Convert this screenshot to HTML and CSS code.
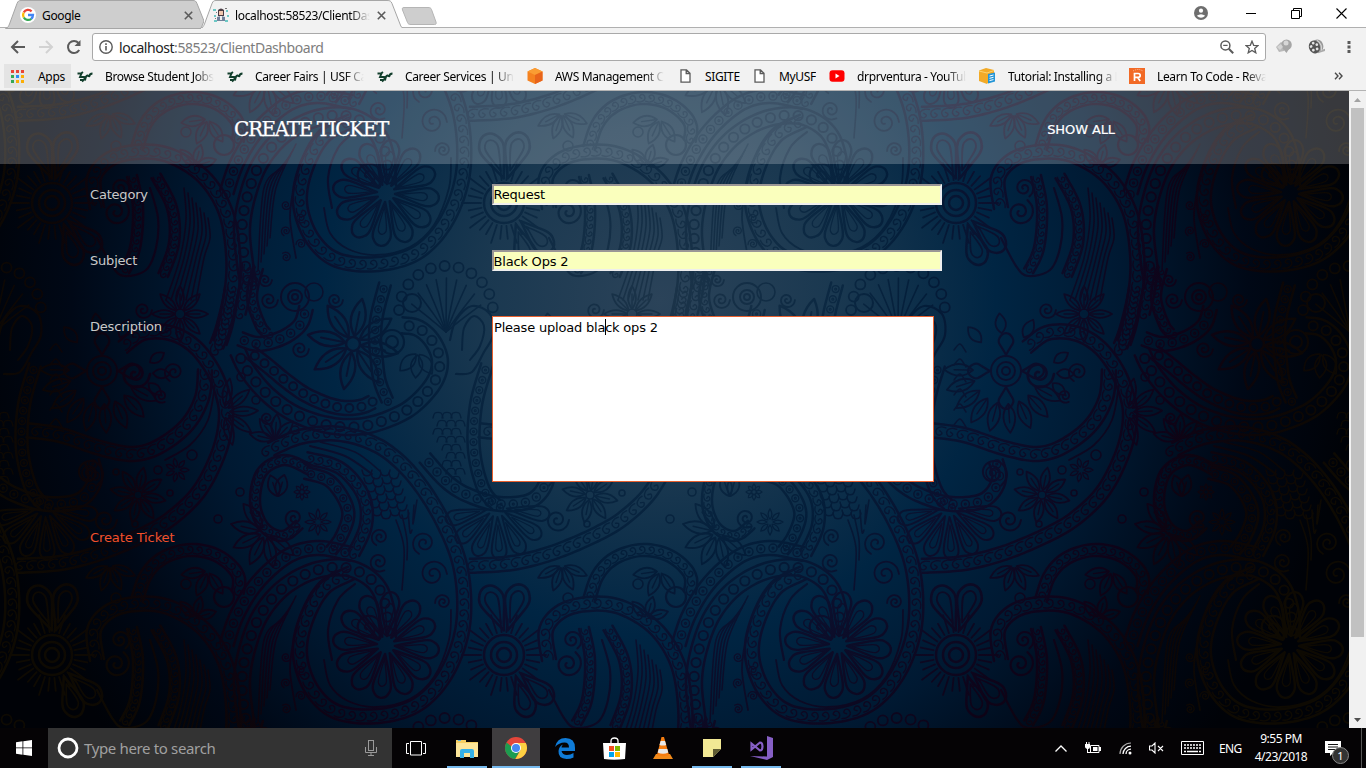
FILE: index.html
```html
<!DOCTYPE html>
<html lang="en">
<head>
<meta charset="utf-8">
<title>Create Ticket</title>
<link rel="stylesheet" href="styles.css">
</head>
<body>
<div class="screen">
  <div class="tabstrip">
    <div class="tab">
      <svg class="tab-shape" width="204" height="29"><path d="M5.500 28.500C8 28 8.500 26 9.500 24L17 3.500C18 1 19 .5 21 .5H193C195 .5 196 1 197 3.500L204 21L201 28.500Z" fill="#cecece" stroke="#a6a6a6"/></svg>
      <svg class="tab-icon" width="16" height="16" viewBox="0 0 16 16"><circle cx="8" cy="8" r="8" fill="#fff"/><g fill="none" stroke-width="2.300"><path d="M3.800 5.400A5 5 0 0 1 11.600 4.300" stroke="#ea4335"/><path d="M3.700 10.400A5 5 0 0 1 3.700 5.600" stroke="#fbbc05"/><path d="M11.300 11.800A5 5 0 0 1 3.800 10.500" stroke="#34a853"/><path d="M8 8H13A5 5 0 0 1 11.200 11.800" stroke="#4285f4"/></g></svg>
      <span class="tab-title">Google</span>
      <svg class="tab-close" width="9" height="9"><path d="M.8.8 8.200 8.200M8.200.8.8 8.200" stroke="#5a5a5a" stroke-width="1.600"/></svg>
    </div>
    <div class="tab active">
      <svg class="tab-shape" width="206" height="29"><path d="M0 28.500C3 28 3.500 26 4.500 24L12 3.500C13 1 14 .5 16 .5H187C190 .5 191 1 192 3.500L200 24C201 27 202 28.500 205 28.500" fill="#f2f2f2" stroke="#a6a6a6"/><path d="M1 28.500H205" stroke="#f2f2f2"/></svg>
      <svg class="tab-icon" width="16" height="16" viewBox="0 0 16 16"><path d="M5 6V3Q8 0 11 3V9H5Z" fill="#493b43"/><path d="M6 4H10V8H6Z" fill="#f1c7ae"/><path d="M4 14V10L8 9L12 10V14Z" fill="#72829b"/><path d="M7 9H9V13H7Z" fill="#eee"/><g fill="#6dc8c5"><path d="M0 2H3V4H0ZM1 8H3V10H1ZM13 3H15V5H13ZM14 8H16V10H14ZM1 13H4V15H1ZM12 13H15V15H12Z"/></g><path d="M3 5H4V6H3ZM12 1H14V2H12ZM2 11H3V12H2Z" fill="#777"/></svg>
      <span class="tab-title fade">localhost:58523/ClientDashboard</span>
      <svg class="tab-close" width="9" height="9"><path d="M.8.8 8.200 8.200M8.200.8.8 8.200" stroke="#5a5a5a" stroke-width="1.600"/></svg>
    </div>
    <svg class="new-tab" width="36" height="20"><path d="M3 1.500H27C29 1.500 30 2 30.500 3.500L35 16C35.500 18 35 18.500 33.500 18.500H10C8 18.500 7 18 6.500 16.500L1.500 4C1 2 1.500 1.500 3 1.500Z" fill="#cecece" stroke="#b5b5b5"/></svg>
    <div class="window-buttons">
      <svg width="14" height="14" viewBox="0 0 14 14"><circle cx="7" cy="7" r="7" fill="#6e6e6e"/><circle cx="7" cy="4.700" r="2.100" fill="#fff"/><path d="M2.800 9.800Q7 6.700 11.200 9.800Q7 13.800 2.800 9.800Z" fill="#fff"/></svg>
      <svg class="minimise" width="10" height="12"><path d="M0 6.500H10" stroke="#000"/></svg>
      <svg width="11" height="11"><path d="M.5 2.500H8.500V10.500H.5ZM2.500 2.500V.5H10.500V8.500H8.500" fill="none" stroke="#000"/></svg>
      <svg width="11" height="11"><path d="M.5.5 10.500 10.500M10.500.5.5 10.500" stroke="#000" stroke-width="1.100"/></svg>
    </div>
  </div>

  <div class="toolbar">
    <svg class="nav-icon" width="16" height="16" viewBox="0 0 16 16"><path d="M15 8H2.500M8 2 2 8 8 14" fill="none" stroke="#5a5a5a" stroke-width="2"/></svg>
    <svg class="nav-icon" width="16" height="16" viewBox="0 0 16 16"><path d="M1 8H13.500M8 2 14 8 8 14" fill="none" stroke="#d2d2d2" stroke-width="2"/></svg>
    <svg class="nav-icon" width="16" height="16" viewBox="0 0 16 16"><path d="M13.200 11A6 6 0 1 1 12.500 4" fill="none" stroke="#5a5a5a" stroke-width="2"/><path d="M14.500 1V7H8.500Z" fill="#5a5a5a"/></svg>
    <div class="omnibox">
      <svg width="14" height="14" viewBox="0 0 14 14"><circle cx="7" cy="7" r="6.200" fill="none" stroke="#5a5a5a" stroke-width="1.400"/><path d="M7 6V10.500M7 3.300V4.900" stroke="#5a5a5a" stroke-width="1.600"/></svg>
      <span class="url"><span class="host">localhost</span>:58523/ClientDashboard</span>
      <svg class="zoom-icon" width="14" height="14" viewBox="0 0 14 14"><circle cx="5.400" cy="5.400" r="4.500" fill="none" stroke="#5a5a5a" stroke-width="1.500"/><path d="M3.200 5.400H7.600" stroke="#5a5a5a" stroke-width="1.200"/><path d="M8.800 8.800 13.200 13.200" stroke="#5a5a5a" stroke-width="2"/></svg>
      <svg width="14" height="14" viewBox="0 0 14 14"><path d="M7 1.200 8.700 5.300 13 5.600 9.700 8.400 10.800 12.800 7 10.400 3.200 12.800 4.300 8.400 1 5.600 5.300 5.300Z" fill="none" stroke="#5a5a5a" stroke-width="1.300"/></svg>
    </div>
    <div class="extensions">
      <svg width="18" height="16" viewBox="0 0 18 16"><path d="M1 8 6 3 10 6 9 12 4 13Z" fill="#b9b9b9"/><circle cx="11.500" cy="5.800" r="5.300" fill="#a6a6a6"/><path d="M8 10 11.500 14 14 10Z" fill="#a6a6a6"/><circle cx="11" cy="4" r="2.500" fill="#d7d7d7"/><path d="M2 8 6 5 8 8 5 11Z" fill="#d4d4d4"/></svg>
      <svg width="17" height="16" viewBox="0 0 17 16"><g transform="rotate(-18 8 8)"><ellipse cx="10" cy="7.500" rx="5.500" ry="6.500" fill="#999"/><path d="M8 12.500H16V14.500H8Z" fill="#aaa"/><ellipse cx="6.500" cy="7.500" rx="5.500" ry="6.500" fill="#555"/><g fill="#e4e4e4"><circle cx="6.500" cy="3.500" r="1.400"/><circle cx="3.500" cy="6" r="1.400"/><circle cx="9.500" cy="6" r="1.400"/><circle cx="4.500" cy="10.200" r="1.400"/><circle cx="8.500" cy="10.200" r="1.400"/></g><path d="M11 2Q15 7 12 13" stroke="#ddd" fill="none"/></g></svg>
      <svg width="4" height="14"><path d="M.5 1H3.500V4H.5ZM.5 5.500H3.500V8.500H.5ZM.5 10H3.500V13H.5Z" fill="#5a5a5a"/></svg>
    </div>
  </div>

  <div class="bookmarks">
    <div class="apps"><svg width="13" height="13"><path d="M0 0H3V3H0ZM5 0H8V3H5ZM10 0H13V3H10Z" fill="#ea4335"/><path d="M0 5H3V8H0ZM0 10H3V13H0Z" fill="#34a853"/><path d="M5 5H8V8H5Z" fill="#2a8cf5"/><path d="M10 5H13V8H10ZM5 10H8V13H5ZM10 10H13V13H10Z" fill="#fbae05"/></svg><span>Apps</span></div>
    <div class="mark"><svg width="16" height="16" viewBox="0 0 16 16"><path class="usf" d="M.5 5.500 4 5.500 6 4M4.500 5.500 3 9H7.500Q9 9 7 11.500L5 13.500M3 12H6.500M8 12.500Q9 7 10.500 7.500T12 9Q12.500 5.500 15.500 5.500"/></svg><span>Browse Student Jobs</span></div>
    <div class="mark"><svg width="16" height="16" viewBox="0 0 16 16"><path class="usf" d="M.5 5.500 4 5.500 6 4M4.500 5.500 3 9H7.500Q9 9 7 11.500L5 13.500M3 12H6.500M8 12.500Q9 7 10.500 7.500T12 9Q12.500 5.500 15.500 5.500"/></svg><span>Career Fairs | USF Career</span></div>
    <div class="mark"><svg width="16" height="16" viewBox="0 0 16 16"><path class="usf" d="M.5 5.500 4 5.500 6 4M4.500 5.500 3 9H7.500Q9 9 7 11.500L5 13.500M3 12H6.500M8 12.500Q9 7 10.500 7.500T12 9Q12.500 5.500 15.500 5.500"/></svg><span>Career Services | University</span></div>
    <div class="mark"><svg width="16" height="16" viewBox="0 0 16 16"><path d="M8 0 15.500 3.500V12.500L8 16 .5 12.500V3.500Z" fill="#f58220"/><path d="M8 0 15.500 3.500 8 7 .5 3.500Z" fill="#fa9d33"/><path d="M8 7 15.500 3.500V12.500L8 16Z" fill="#e8641b"/></svg><span>AWS Management Console</span></div>
    <div class="mark file"><svg width="11" height="14" viewBox="0 0 11 14"><path d="M1 .8H6.500L10 4.300V13.200H1ZM6.200.8V4.500H10" fill="#fff" stroke="#5a5a5a" stroke-width="1.300"/></svg><span>SIGITE</span></div>
    <div class="mark file"><svg width="11" height="14" viewBox="0 0 11 14"><path d="M1 .8H6.500L10 4.300V13.200H1ZM6.200.8V4.500H10" fill="#fff" stroke="#5a5a5a" stroke-width="1.300"/></svg><span>MyUSF</span></div>
    <div class="mark"><svg width="16" height="16" viewBox="0 0 16 16"><rect x=".5" y="2.300" width="15" height="11.400" rx="3" fill="#f00"/><path d="M6.500 5.500V10.500L10.500 8Z" fill="#fff"/></svg><span>drprventura - YouTube</span></div>
    <div class="mark"><svg width="17" height="16" viewBox="0 0 17 16"><path d="M0 2.500 7 0 15 2V7L8 16 0 13Z" fill="#f2aa27"/><path d="M0 3 8 5 15 2.500" stroke="#fbd36f" fill="none"/><path d="M9 6 16 4.500V13.500L9 15.500Z" fill="#2395d6"/><path d="M10.500 8 14.500 7M10.500 10.300 14.500 9.300M10.500 12.600 14.500 11.600" stroke="#fff"/></svg><span>Tutorial: Installing a LAMP</span></div>
    <div class="mark"><svg width="16" height="16" viewBox="0 0 16 16"><rect width="16" height="16" fill="#f26a26"/><path d="M5.500 13V5.500H9Q11.200 5.500 11.200 7.400T9 9.300H5.500M8.500 9.300 11.200 13" fill="none" stroke="#fff" stroke-width="1.700"/><path d="M4 3Q9 0 14 3" stroke="#ffc3a1" fill="none" stroke-dasharray="1 1"/></svg><span>Learn To Code - Revature</span></div>
    <div class="more"><svg width="9" height="8"><path d="M1 .8 4 4 1 7.200M5 .8 8 4 5 7.200" fill="none" stroke="#4a4a4a" stroke-width="1.400"/></svg></div>
  </div>

  <div class="viewport">
    <div class="page">
      <svg class="backdrop" width="1349" height="637" viewBox="0 91 1349 637">
        <defs>
          <radialGradient id="ground" gradientUnits="userSpaceOnUse" cx="660" cy="300" r="700">
            <stop offset="0" stop-color="#2b4359"/><stop offset=".25" stop-color="#1a3850"/><stop offset=".48" stop-color="#002543"/><stop offset=".66" stop-color="#001932"/><stop offset=".84" stop-color="#000816"/><stop offset="1" stop-color="#000207"/>
          </radialGradient>
          <radialGradient id="ink" gradientUnits="userSpaceOnUse" cx="660" cy="300" r="700">
            <stop offset="0" stop-color="#1c3449"/><stop offset=".25" stop-color="#0b2842"/><stop offset=".38" stop-color="#031d39"/><stop offset=".5" stop-color="#0b0f2d"/><stop offset=".74" stop-color="#0e0318"/><stop offset=".88" stop-color="#0c0606"/><stop offset="1" stop-color="#0e0a02"/>
          </radialGradient>
          <g id="motif" fill="none" stroke="#fff" stroke-linecap="round" stroke-linejoin="round"></g>
          <pattern id="tile" width="452" height="452" patternUnits="userSpaceOnUse" x="0" y="-184">
            <g id="copies"></g>
          </pattern>
          <mask id="lace" maskUnits="userSpaceOnUse" x="0" y="91" width="1349" height="637"><rect x="0" y="91" width="1349" height="637" fill="url(#tile)"/></mask>
        </defs>
        <rect x="0" y="91" width="1349" height="637" fill="url(#ground)"/>
        <rect x="0" y="91" width="1349" height="637" fill="url(#ink)" mask="url(#lace)"/>
      </svg>
      <header class="banner">
        <h1>CREATE TICKET</h1>
        <a class="show-all">SHOW ALL</a>
      </header>
      <form class="ticket">
        <label>Category</label><div class="field">Request</div>
        <label>Subject</label><div class="field second">Black Ops 2</div>
        <label>Description</label><div class="area">Please upload bla<i class="caret"></i>ck ops 2</div>
        <a class="submit">Create Ticket</a>
      </form>
    </div>
    <div class="scrollbar">
      <svg width="17" height="17"><path d="M5 11 8.500 7 12 11Z" fill="#a3a3a3"/></svg>
      <div class="thumb"></div>
      <svg class="down" width="17" height="17"><path d="M5 7 8.500 11 12 7Z" fill="#505050"/></svg>
    </div>
  </div>

  <div class="taskbar">
    <div class="start"><svg width="16" height="16"><path d="M0 2.300 6.500 1.300V7.500H0ZM7.300 1.200 16 0V7.500H7.300ZM0 8.300H6.500V14.700L0 13.700ZM7.300 8.300H16V16L7.300 14.800Z" fill="#fff"/></svg></div>
    <div class="search">
      <svg width="22" height="22"><circle cx="11" cy="11" r="9" fill="none" stroke="#fff" stroke-width="2.800"/></svg>
      <span>Type here to search</span>
      <svg class="mic" width="12" height="16"><rect x="3.500" y=".5" width="5" height="10" fill="none" stroke="#9a9a9a"/><path d="M.5 7V12.500H11.500V7M6 12.500V15.500M3 15.500H9" fill="none" stroke="#9a9a9a"/></svg>
    </div>
    <div class="task-view"><svg width="20" height="15"><path d="M4.500.5H15.500V14H4.500ZM3 2.500H.5V12.500H3M17 2.500H19.500V12.500H17" fill="none" stroke="#fff"/></svg></div>
    <div class="task-icons">
      <div class="task open"><svg width="22" height="19" viewBox="0 0 22 19"><path d="M0 1H10V3H22V18H0Z" fill="#f6cf62"/><path d="M0 4H22V18H0Z" fill="#fde69a"/><path d="M2 1H5V2H2Z" fill="#58b2e8"/><path d="M4 19V12Q4 10 6 10H16Q18 10 18 12V19H14V14H8V19Z" fill="#35b1e8"/></svg></div>
      <div class="task open current"><svg width="22" height="22" viewBox="0 0 22 22"><circle cx="11" cy="11" r="11" fill="#e4463a"/><path d="M1.500 5.500A11 11 0 0 0 10 22L15.500 13H11Z" fill="#1c9c50"/><path d="M20.800 6H11L15.500 13 10.500 22A11 11 0 0 0 20.800 6Z" fill="#fdd042"/><circle cx="11" cy="11" r="5" fill="#fff"/><circle cx="11" cy="11" r="4" fill="#4688f1"/></svg></div>
      <div class="task"><svg width="20" height="21" viewBox="0 0 20 21"><path d="M0 9Q2 0 10.500 0Q20 0 20 10V13H6.500Q7.500 17 12 17Q15.500 17 18.500 15V19.500Q15.500 21 11.500 21Q3 20.500 3.500 13Q4 8 8 6.500Q6.500 8 6.500 9.500H14Q14 4.500 9.500 4.500Q4 4.500 0 9Z" fill="#0f7bd7"/></svg></div>
      <div class="task"><svg width="23" height="23" viewBox="0 0 23 23"><path d="M0 6H23L22 22Q11 23.500 1 22Z" fill="#fff"/><path d="M8 9V4Q8 1 11.500 1Q15 1 15 4V9" fill="none" stroke="#fff" stroke-width="1.300"/><path d="M6 9H11V14H6Z" fill="#f25022"/><path d="M12 9H17V14H12Z" fill="#7fba00"/><path d="M6 15H11V20H6Z" fill="#00a4ef"/><path d="M12 15H17V20H12Z" fill="#ffb900"/></svg></div>
      <div class="task"><svg width="20" height="22" viewBox="0 0 20 22"><path d="M3 17H17L20 22H0Z" fill="#f18a1a"/><path d="M8.500 0H11L16 18Q10 20.500 4 18Z" fill="#f57d11"/><path d="M7.600 4H12L13.200 8Q10 9 6.500 8Z" fill="#e8e8e8"/><path d="M5.700 12H14.300L15.300 15.500Q10 18 4.700 15.500Z" fill="#e8e8e8"/></svg></div>
      <div class="task open"><svg width="18" height="18"><path d="M0 0H18V10L10 18H0Z" fill="#f2e894"/><path d="M10 18V10H18Z" fill="#5f5b32"/></svg></div>
      <div class="task open"><svg width="24" height="24" viewBox="0 0 24 24"><path d="M18 0 24 2V21L18 24 1 20 18 20.500Z" fill="#865fc5"/><path d="M2.500 7.500V13.500L11 6.500Q13.500 6.500 13.500 10.500T11 14.500Z" fill="none" stroke="#865fc5" stroke-width="2.200"/></svg></div>
    </div>
    <div class="tray">
      <svg class="t1" width="12" height="7"><path d="M.5 6.500 6 1 11.500 6.500" fill="none" stroke="#fff" stroke-width="1.300"/></svg>
      <svg class="t2" width="16" height="12"><path d="M5.500 3.500H14V10.500H5.500Z" fill="none" stroke="#fff"/><path d="M8 5H12.500V9H8ZM14 5H16V9H14ZM0 2H5V5Q5 7 3 7V10H6V11H2V7Q0 6 0 5ZM1 0H2V2H1ZM3.500 0H4.500V2H3.500Z" fill="#fff"/></svg>
      <svg class="t3" width="13" height="13"><path d="M1 12A11 11 0 0 1 12 1" stroke="#aaa" fill="none" stroke-width="1.200"/><path d="M4 12A8 8 0 0 1 12 4.200M7 12A5 5 0 0 1 12 7.200" stroke="#fff" fill="none" stroke-width="1.300"/><circle cx="11" cy="11" r="1.500" fill="#fff"/></svg>
      <svg class="t4" width="15" height="12"><path d="M.5 4H3L6 1V11L3 8H.5ZM9 4 14 9M14 4 9 9" fill="none" stroke="#fff" stroke-width="1.100"/></svg>
      <svg class="t5" width="23" height="14"><path d="M.5.5H22.500V13.500H.5Z" fill="none" stroke="#fff"/><path d="M3 4H20M3 7H20" stroke="#fff" stroke-width="1.600" stroke-dasharray="2 1"/><path d="M3 10.500H5M6 10.500H17M18 10.500H20" stroke="#fff" stroke-width="1.500"/></svg>
      <span class="lang">ENG</span>
      <div class="clock"><span>9:55 PM</span><span>4/23/2018</span></div>
      <div class="action"><svg width="16" height="15"><path d="M0 0H16V12H8L5 15V12H0Z" fill="#fff"/><path d="M3 3.500H13M3 6H13M3 8.500H10" stroke="#111"/></svg><b>1</b></div>
    </div>
  </div>
</div>
<script src="pattern.js"></script>
</body>
</html>
```
FILE: styles.css
```css
* { box-sizing: border-box; }
body { margin: 0; overflow: hidden; font: 12px "Noto Sans", sans-serif; color: #000; }
svg { display: block; flex: none; }
.screen { width: 1366px; height: 768px; display: flex; flex-direction: column; overflow: hidden; background: #fff; }

/* browser frame */
.tabstrip { height: 28px; display: flex; border-bottom: 1px solid #b0b0b0; flex: none; }
.tab { position: relative; width: 200px; height: 28px; display: flex; align-items: center; padding: 2px 7px 0 20px; }
.tab.active { width: 204px; padding: 2px 18px 0 13px; z-index: 1; }
.tab-shape { position: absolute; left: 0; top: 0; }
.tab-icon, .tab-title, .tab-close { position: relative; }
.tab-title { flex: 1; margin-left: 6px; white-space: nowrap; overflow: hidden; letter-spacing: -.35px; }
.tab.active .tab-title { margin: 0 7px 0 6px; }
.fade { -webkit-mask-image: linear-gradient(to right, #000 85%, transparent); mask-image: linear-gradient(to right, #000 85%, transparent); }
.new-tab { margin: 6px 0 0 -3px; z-index: 2; }
.window-buttons { margin-left: auto; width: 172px; display: flex; align-items: center; justify-content: space-between; padding: 0 19px 0 0; height: 26px; }
.minimise { margin-left: 4px; }
.toolbar { height: 36px; background: #f2f2f2; display: flex; align-items: center; padding-left: 10px; flex: none; padding-top: 2px; }
.nav-icon { margin-right: 12px; }
.omnibox { width: 1174px; height: 28px; margin-left: -2px; background: #fff; border: 1px solid #a9a9a9; border-radius: 3px; display: flex; align-items: center; padding: 0 6px; }
.url { margin-left: 6px; font-size: 14px; color: #7d7d7d; letter-spacing: -.45px; }
.host { color: #222; }
.zoom-icon { margin: 0 11px 0 auto; }
.extensions { display: flex; align-items: center; margin-left: 9px; gap: 15px; }
.extensions svg:last-child { margin-left: 7px; }
.bookmarks { height: 27px; background: #f2f2f2; border-bottom: 1px solid #b3b3b3; flex: none; display: grid; grid-template-columns: 73px repeat(4, 150px) 74px 78px 150px 150px 150px 1fr; padding-left: 4px; align-items: start; }
.apps { width: 67px; height: 24px; display: flex; align-items: center; padding-left: 7px; background: #e4e4e4; gap: 14px; letter-spacing: -.3px; }
.mark { display: flex; align-items: center; height: 24px; gap: 12px; }
.mark span { width: 109px; overflow: hidden; white-space: nowrap; letter-spacing: -.35px; -webkit-mask-image: linear-gradient(to right, #000 82%, transparent); mask-image: linear-gradient(to right, #000 82%, transparent); }
.mark.file { padding-left: 3px; gap: 14px; }
.mark.file span { width: auto; -webkit-mask-image: none; mask-image: none; }
.usf { fill: none; stroke: #123e2c; stroke-width: 1.9; }
.more { height: 24px; display: flex; align-items: center; padding-left: 55px; }

/* web page */
.viewport { height: 637px; display: flex; flex: none; }
.page { position: relative; width: 1349px; font: 13px "DejaVu Sans", sans-serif; letter-spacing: -.2px; }
.backdrop { position: absolute; left: 0; top: 0; }
.banner { position: relative; height: 73px; background: rgba(255,255,255,.22); display: flex; align-items: center; padding: 3px 234px 0 234px; justify-content: space-between; color: #fff; }
.banner h1 { margin: 0; font: 20px "DejaVu Serif", serif; letter-spacing: -1.4px; -webkit-text-stroke: .25px #fff; }
.show-all { letter-spacing: -.1px; -webkit-text-stroke: .2px #fff; }
.ticket { position: relative; display: grid; grid-template-columns: 402px 450px; grid-template-rows: 66px 66px 211px auto; padding: 20px 0 0 90px; color: #c9c9c9; align-items: start; }
.ticket label { line-height: 22px; }
.field { width: 450px; height: 21px; background: #faffbd; border: 2px solid; border-color: #9a9696 #eee #eee #9a9696; color: #000; line-height: 18px; white-space: nowrap; text-indent: -.5px; }
.field.second { line-height: 20px; }
.area { width: 442px; height: 166px; background: #fff; border: 1px solid #e8602e; color: #000; padding: 2px 1px; line-height: 18px; }
.caret { display: inline-block; width: 1px; height: 16px; background: #000; vertical-align: -3px; margin-right: -1px; }
.submit { color: #f2512c; line-height: 22px; letter-spacing: -.1px; }
.scrollbar { width: 17px; background: #f1f1f1; display: flex; flex-direction: column; }
.thumb { height: 529px; width: 13px; margin-left: 2px; background: #c1c1c1; }
.down { margin-top: auto; }

/* taskbar */
.taskbar { height: 40px; background: #050305; display: flex; flex: none; color: #fff; }
.start { width: 48px; display: flex; align-items: center; justify-content: center; }
.search { width: 344px; background: #333; display: flex; align-items: center; padding: 0 15px 0 9px; color: #a0a0a0; font-size: 15px; letter-spacing: -.35px; }
.search span { margin-left: 5px; }
.mic { margin-left: auto; }
.task-view { width: 48px; display: flex; align-items: center; justify-content: center; margin-right: 3px; }
.task-icons { display: flex; gap: 1px; }
.task { width: 48px; height: 40px; display: flex; align-items: center; justify-content: center; border: solid transparent; border-width: 2px 0 2px; }
.task.open { background: linear-gradient(#76b9ed, #76b9ed) center bottom / 40px 2px no-repeat border-box; }
.task.current { background: linear-gradient(#76b9ed, #76b9ed) bottom / 48px 2px no-repeat border-box, #3f3d3f border-box; }
.tray { margin-left: auto; width: 311px; display: flex; align-items: center; }
.t2 { margin-left: 18px; }
.t3 { margin-left: 18px; }
.t4 { margin-left: 17px; }
.t5 { margin-left: 17px; }
.lang { margin-left: 15px; width: 24px; letter-spacing: -.6px; }
.clock { width: 62px; margin-left: 7px; display: flex; flex-direction: column; align-items: center; line-height: 18px; letter-spacing: -.5px; }
.action { position: relative; margin-left: 13px; }
.action b { position: absolute; left: 7px; top: 6px; width: 17px; height: 17px; border: 1px solid #888; border-radius: 50%; background: #333; text-align: center; font: 11px/15px "Noto Sans", sans-serif; }
.tray::after { content: ""; width: 1px; height: 40px; background: #555; margin-left: auto; margin-right: 4px; }
```
FILE: pattern.js
```js
// Builds the paisley tile from a small set of ornaments.
const NS = "http://www.w3.org/2000/svg";
const motif = document.getElementById("motif");

function add(name, attrs) {
  const el = document.createElementNS(NS, name);
  for (const key in attrs) el.setAttribute(key, attrs[key]);
  motif.appendChild(el);
  return el;
}

function smooth(points) {
  let d = `M${points[0][0]} ${points[0][1]}`;
  for (let i = 0; i < points.length - 1; i++) {
    const a = points[i - 1] || points[i], b = points[i], c = points[i + 1], e = points[i + 2] || c;
    d += `C${b[0] + (c[0] - a[0]) / 6} ${b[1] + (c[1] - a[1]) / 6} ${c[0] - (e[0] - b[0]) / 6} ${c[1] - (e[1] - b[1]) / 6} ${c[0]} ${c[1]}`;
  }
  return d;
}

const line = (points, w = 1.8) => add("path", { d: smooth(points), "stroke-width": w });
const ring = (x, y, r, w = 1.6) => add("circle", { cx: x, cy: y, r, "stroke-width": w });

function spiral(x, y, r, start = 0, dir = 1, w = 1.8) {
  const pts = [];
  for (let i = 0; i <= 22; i++) {
    const a = start + dir * i * 0.5, q = r * (1 - i / 25);
    pts.push([x + q * Math.cos(a), y + q * Math.sin(a)]);
  }
  line(pts, w);
}

// A ribbon: two edges with scrolls, beads or double rings between them.
function band(points, half, kind) {
  const guide = add("path", { d: smooth(points), stroke: "none" });
  const total = guide.getTotalLength();
  const at = (s, off) => {
    const p = guide.getPointAtLength(Math.max(0, s)), q = guide.getPointAtLength(Math.min(total, s + 1));
    const o = guide.getPointAtLength(Math.max(0, s - 1));
    const dx = q.x - o.x, dy = q.y - o.y, n = Math.hypot(dx, dy) || 1;
    return [p.x - dy / n * off, p.y + dx / n * off];
  };
  for (const side of [-1, 1]) {
    const edge = [];
    for (let s = 0; s <= total; s += 7) edge.push(at(s, side * half));
    line(edge, 2.5);
  }
  const step = half * (kind === "scroll" ? 1.55 : 1.75);
  for (let s = step / 2; s < total; s += step) {
    const [x, y] = at(s, 0), n = at(s + 1, 0), a = Math.atan2(n[1] - y, n[0] - x);
    const r = half * 0.58;
    if (kind === "scroll") {
      const pts = [[-1.4, 1], [-.3, 1.1], [.8, .5], [.8, -.6], [0, -1], [-.6, -.4], [0, .1]].map(([u, v]) =>
        [x + r * (u * Math.cos(a) - v * Math.sin(a)), y + r * (u * Math.sin(a) + v * Math.cos(a))]);
      line(pts, 1.4);
    } else {
      ring(x, y, r, kind === "bead" ? 1.9 : 1.4);
      if (kind === "rings") ring(x, y, 1, 1.2);
    }
  }
}

function petals(x, y, count, inner, outer, width, { pointed = false, from = 0, sweep = Math.PI * 2, vein = false, w = 1.8 } = {}) {
  for (let i = 0; i < count; i++) {
    const a = (from + sweep * i / count) * 180 / Math.PI;
    const len = outer - inner;
    const d = pointed
      ? `M${inner} 0Q${inner + len * .45} ${-width * 1.3} ${outer} 0Q${inner + len * .45} ${width * 1.3} ${inner} 0`
      : `M${inner} 0C${inner + len * .5} ${-width * .6} ${outer - width} ${-width} ${outer - width * .5} ${-width * .75}C${outer + width * .3} ${-width * .4} ${outer + width * .3} ${width * .4} ${outer - width * .5} ${width * .75}C${outer - width} ${width} ${inner + len * .5} ${width * .6} ${inner} 0`;
    add("path", { d, "stroke-width": w, transform: `translate(${x} ${y}) rotate(${a})` });
    if (vein) add("path", { d: `M${inner + 2} 0H${inner + len * .65}`, "stroke-width": w * .8, transform: `translate(${x} ${y}) rotate(${a})` });
  }
}

// large paisley around the twelve-petal flower
petals(386, 645, 12, 9, 52, 11, { w: 2.4, from: .1 });
petals(386, 645, 12, 14, 41, 5, { w: 1.3, from: .1 });
spiral(368, 628, 15, .8, -1, 2.2);
band([[388, 638], [386, 608], [375, 583], [348, 568], [314, 571], [283, 588], [261, 614], [248, 646], [242, 680], [245, 715], [250, 745]], 8, "bead");
band([[351, 573], [324, 588], [306, 620], [300, 655], [312, 690], [337, 712], [378, 716], [418, 704], [447, 672], [463, 625], [461, 570], [443, 522], [414, 477], [380, 447], [340, 434], [300, 437], [265, 452]], 7, "scroll");
band([[351, 554], [318, 548], [288, 556], [258, 582], [237, 615], [225, 650]], 7, "rings");
line([[345, 568], [320, 584], [303, 610], [294, 640], [290, 670], [296, 710]]);
line([[324, 660], [330, 685], [348, 701], [376, 707], [410, 699], [434, 677], [449, 640], [451, 610]], 1.8);
line([[332, 660], [328, 630], [338, 600], [355, 584]], 2.2);
for (let i = 0; i < 5; i++) line([[296 - i * 3, 596 + i * 6], [276 - i * 3, 640], [270 - i * 3, 690 + i * 8]], 1.5);
for (let i = 0; i < 5; i++) spiral(286 + i % 2 * 15, 657 + i * 13, 5, i, 1, 1.3);

// inner curl with leaves and stars
band([[306, 473], [331, 482], [348, 510], [342, 535], [330, 552]], 6, "rings");
band([[306, 458], [340, 468], [363, 495], [366, 525], [353, 555]], 6, "scroll");
band([[310, 470], [285, 460], [262, 472], [255, 502], [264, 527], [283, 536], [300, 524]], 5, "scroll");
spiral(294, 518, 10, 1, 1, 2);
petals(266, 532, 6, 6, 36, 9, { pointed: true, from: .7, sweep: 4, vein: true });
petals(278, 498, 2, 2, 24, 9, { pointed: true, from: -1.9, sweep: 1.2, vein: true });
petals(302, 492, 8, 2, 8, 2.5, { pointed: true, w: 1.2 });
petals(318, 522, 8, 3, 13, 3, { pointed: true, w: 1.3 });
ring(240, 492, 4); ring(218, 519, 4);

// fish scales, reeds and spirals on the paisley's right side
for (let r = 0; r < 6; r++) for (let i = 0; i < 4; i++) {
  const x = 367 + i * 9 + r * 2, y = 470 + r * 8 + i % 2 * 3;
  line([[x - 5, y], [x - 3, y + 5], [x + 3, y + 5], [x + 5, y]], 1.5);
}
line([[310, 446], [345, 456], [372, 474]], 2); line([[320, 442], [355, 452], [380, 471]], 1.5);
spiral(380, 537, 9, 2, 1); spiral(379, 562, 10, 1, 1); spiral(424, 543, 12, 2, 1); spiral(433, 574, 14, 0, -1); spiral(443, 602, 8, 3, 1);
for (let i = 0; i < 4; i++) line([[396 + i * 6, 520 - i * 5], [404 + i * 3, 548 - i * 8], [402 + i * 5, 590 - i * 30]], 1.6);

// sunburst with long petals
for (const r of [7, 13, 20]) ring(52, 655, r, 2.5);
for (let i = 0; i < 30; i++) {
  const a = i * Math.PI / 15, q = i % 3 ? 36 : 42;
  line([[52 + 23 * Math.cos(a), 655 + 23 * Math.sin(a)], [52 + q * Math.cos(a), 655 + q * Math.sin(a)]], 1.8);
}
petals(54, 636, 2, 6, 52, 15, { from: -1.95, sweep: 1.35, w: 2.6 });
petals(54, 636, 2, 14, 46, 8, { from: -1.95, sweep: 1.35, w: 1.8 });
petals(60, 665, 2, 12, 53, 13, { from: .75, sweep: 1, w: 2.5 });
petals(60, 665, 2, 20, 46, 7, { from: .75, sweep: 1, w: 1.6 });

// hook paisley
band([[97, 660], [94, 630], [110, 611], [136, 604], [165, 606], [193, 620], [213, 640], [227, 668], [233, 705], [232, 740], [223, 780], [214, 804]], 7, "scroll");
spiral(116, 664, 14, -1, 1, 2.2);
spiral(120, 640, 10, 1, -1, 2);
for (let i = 0; i < 7; i++) line([[184 + i * 4, 640 + i * 5], [186 + i * 4, 672 + i * 3], [180 + i * 4, 710], [166 + i * 5, 752]], 1.6);
band([[132, 628], [138, 660], [135, 700], [124, 724]], 5, "scroll");
band([[156, 628], [172, 660], [174, 695], [162, 730]], 5, "scroll");
line([[97, 690], [112, 718], [124, 728], [146, 722], [156, 700], [158, 670], [150, 640]], 2.2);

// small hook with leaves
band([[137, 600], [146, 575], [163, 558], [190, 550], [218, 556], [238, 575], [237, 597]], 6, "scroll");
ring(224, 597, 10, 2.2); ring(186, 584, 5);
petals(208, 571, 3, 3, 27, 8, { pointed: true, from: 1, sweep: 3, vein: true });
petals(195, 618, 3, 2, 22, 7, { pointed: true, from: -2.3, sweep: 3, vein: true });
petals(110, 565, 4, 3, 27, 7, { pointed: true, from: .4, sweep: 3, vein: true }); ring(116, 598, 5);

// sweeping ribbon
band([[123, 347], [143, 333], [170, 333], [193, 345], [211, 367], [222, 392], [226, 418], [219, 452], [200, 490], [173, 517], [143, 535], [100, 553], [60, 563], [15, 566]], 7, "scroll");
band([[205, 370], [202, 398], [187, 425], [160, 446], [133, 454], [100, 448], [60, 435], [25, 430]], 7, "scroll");
line([[215, 385], [208, 420], [190, 445], [165, 460]]);

// flower cluster
for (const r of [4, 9, 15]) ring(102, 371, r, 2);
petals(102, 371, 4, 16, 37, 9, { w: 2.2, from: Math.PI / 2 });
petals(102, 371, 9, 33, 62, 9, { pointed: true, from: .5, sweep: 3, vein: true });
petals(102, 371, 3, 38, 58, 8, { pointed: true, from: 4, sweep: 1.8 });
spiral(135, 374, 15, 0, 1, 2.6); spiral(174, 372, 10, 2, 1); spiral(161, 396, 7, 1, 1);
petals(136, 372, 3, 17, 34, 7, { pointed: true, from: -.6, sweep: 2 });
petals(180, 314, 8, 5, 28, 6, { pointed: true, vein: true }); ring(180, 314, 5);
petals(138, 495, 8, 5, 28, 7, { pointed: true, vein: true, from: .2 }); ring(138, 495, 4);
petals(177, 470, 7, 3, 12, 3, { pointed: true, w: 1.3 });
spiral(143, 310, 9, 0, 1); ring(192, 455, 5); ring(158, 470, 4); ring(116, 472, 3); ring(170, 493, 3);
spiral(105, 520, 12, 0, 1, 2); ring(135, 524, 3);
petals(224, 412, 5, 6, 34, 7, { pointed: true, from: -1.4, sweep: 3.4, vein: true });
petals(275, 440, 4, 2, 26, 7, { pointed: true, from: -2.9, sweep: 2.8, vein: true });
ring(241, 377, 4); ring(256, 400, 4); spiral(267, 418, 7, 0, 1); ring(295, 430, 4);

// beaded crescent and eight-leaf flower
band([[238, 352], [247, 370], [267, 394], [293, 413], [323, 424], [353, 427], [380, 422], [410, 408], [433, 384], [440, 362], [433, 342], [418, 328], [397, 325]], 8, "bead");
band([[250, 352], [268, 366], [290, 384], [310, 397], [337, 407], [360, 407], [376, 400]], 7, "bead");
ring(392, 342, 6, 2); ring(392, 342, 12, 2.2);
band([[385, 284], [377, 315], [375, 338], [377, 362], [380, 382], [388, 402]], 6, "rings");
petals(353, 344, 8, 8, 46, 11, { pointed: true, vein: true, w: 2.4, from: .2 }); ring(353, 344, 7, 2.6);
for (const r of [3, 7, 14]) ring(295, 297, r, 2);
ring(314, 292, 9); spiral(269, 300, 9, 0, 1); spiral(335, 300, 8, 0, 1); spiral(300, 349, 9, 0, 1); spiral(265, 280, 7, 0, 1);
band([[306, 308], [300, 325], [282, 338], [258, 344], [238, 338]], 7, "rings");
band([[232, 740], [226, 775], [218, 800]], 7, "scroll");
band([[248, 265], [245, 290], [238, 320]], 6, "scroll");
band([[258, 720], [252, 750], [262, 780], [272, 788]], 5, "scroll");

// palm fan with bead halo
for (let i = 0; i < 9; i++) { const a = -2.6 + i * .26; line([[446, 332], [446 + 30 * Math.cos(a) * .6, 332 + 42 * Math.sin(a) * .6], [446 + 40 * Math.cos(a), 332 + 54 * Math.sin(a)]], 1.6); }
for (let i = 0; i < 11; i++) { const a = -3.1 + i * .3; ring(446 + 47 * Math.cos(a), 312 + 46 * Math.sin(a), 5, 1.8); }
line([[450, 340], [456, 320], [472, 306], [490, 314], [493, 335], [484, 352], [472, 372], [456, 374]], 2.2);
line([[462, 350], [464, 328], [474, 316], [484, 326], [480, 346], [470, 360]], 2);
ring(412, 303, 9, 2);
petals(418, 352, 3, 3, 26, 9, { pointed: true, from: 1, sweep: 2, w: 1.6 });

// tall leaf with ring border
band([[487, 365], [476, 405], [474, 450], [484, 490], [500, 508]], 6, "rings");
band([[425, 458], [447, 482], [470, 496], [500, 504], [532, 500], [547, 480], [543, 458]], 7, "rings");
for (let r = 0; r < 9; r++) for (let i = 0; i < 3; i++) {
  const x = 438 + i * 9 + r % 2 * 4, y = 415 + r * 8;
  if (x > 428 + r * 3) line([[x - 5, y + 3], [x - 3, y - 2], [x + 3, y - 2], [x + 5, y + 3]], 1.4);
}
for (let r = 0; r < 6; r++) line([[502, 350 + r * 15], [508, 344 + r * 15], [514, 352 + r * 15]], 1.5);
petals(497, 507, 7, 10, 52, 9, { from: .15, sweep: 3.2, w: 2 });
petals(497, 507, 7, 18, 44, 4, { from: .15, sweep: 3.2, w: 1.3 });
spiral(541, 473, 15, 1, -1, 2); for (const r of [3, 7]) ring(541, 473, r);

const copies = document.getElementById("copies");
for (const dx of [-452, 0, 452]) for (const dy of [-452, 0, 452]) {
  const use = document.createElementNS(NS, "use");
  use.setAttribute("href", "#motif");
  use.setAttribute("x", dx);
  use.setAttribute("y", dy - 268);
  copies.appendChild(use);
}
```
